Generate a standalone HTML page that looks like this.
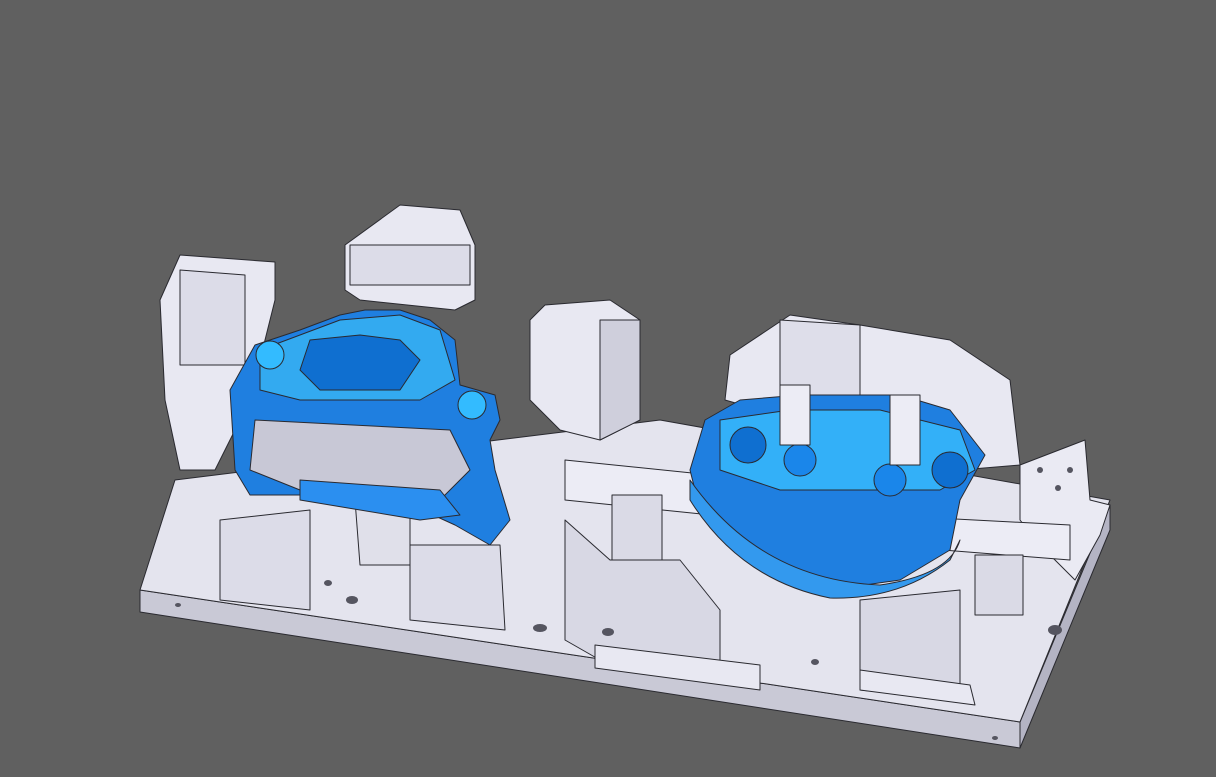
<!DOCTYPE html>
<html><head><meta charset="utf-8"><style>
html,body{margin:0;padding:0;background:#606060;width:1216px;height:777px;overflow:hidden}
svg{display:block}
</style></head><body>
<svg width="1216" height="777" viewBox="0 0 1216 777" xmlns="http://www.w3.org/2000/svg">
<rect width="1216" height="777" fill="#606060"/>
<g stroke="#2a2a30" stroke-width="1" stroke-linejoin="round">
<polygon points="140,590 1020,722 1020,748 140,612" fill="#c9c9d6"/>
<polygon points="1020,722 1110,505 1110,530 1020,748" fill="#b4b4c4"/>
<polygon points="175,480 660,420 1110,500 1020,722 140,590" fill="#e4e4ee"/>
<!-- left towers -->
<polygon points="160,300 180,255 275,262 275,300 250,400 215,470 180,470 165,400" fill="#e8e8f2"/>
<polygon points="180,270 245,275 245,365 180,365" fill="#dcdce8"/>
<polygon points="345,245 400,205 460,210 475,245 475,300 455,310 360,300 345,290" fill="#e8e8f2"/>
<polygon points="350,245 470,245 470,285 350,285" fill="#dcdce8"/>
<polygon points="530,320 545,305 610,300 640,320 640,420 600,440 560,430 530,400" fill="#e8e8f2"/>
<polygon points="600,320 640,320 640,420 600,440" fill="#cfcfdc"/>
<!-- right towers -->
<polygon points="730,355 790,315 860,325 950,340 1010,380 1020,465 960,470 900,420 760,410 725,400" fill="#e8e8f2"/>
<polygon points="780,320 860,325 860,395 780,395" fill="#dedeea"/>
<polygon points="1020,465 1085,440 1090,500 1110,505 1100,535 1075,580 1040,545 1020,520" fill="#eaeaf3"/>
<!-- middle blocks and cylinders -->
<polygon points="565,460 760,480 760,520 565,500" fill="#ececf5"/>
<polygon points="880,515 1070,525 1070,560 880,545" fill="#ececf5"/>
<rect x="612" y="495" width="50" height="70" fill="#dadae6"/>
<rect x="975" y="555" width="48" height="60" fill="#dadae6"/>
<polygon points="565,520 610,560 680,560 720,610 720,665 600,660 565,640" fill="#d8d8e4"/>
<polygon points="860,600 960,590 960,700 860,690" fill="#d8d8e4"/>
<polygon points="595,645 760,665 760,690 595,668" fill="#e8e8f2"/>
<polygon points="860,670 970,685 975,705 860,690" fill="#e8e8f2"/>
<polygon points="220,520 310,510 310,610 220,600" fill="#dcdce8"/>
<polygon points="410,545 500,545 505,630 410,620" fill="#dcdce8"/>
<polygon points="340,420 400,420 410,480 350,480" fill="#eeeef6"/>
<polygon points="355,500 410,500 410,565 360,565" fill="#e0e0ea"/>
<!-- left blue part -->
<polygon points="230,390 255,345 300,330 340,315 365,310 400,310 430,320 455,340 460,385 495,395 500,420 490,440 495,470 510,520 490,545 455,525 400,500 350,490 300,495 250,495 235,470" fill="#1f7fe0"/>
<polygon points="260,350 300,335 340,320 400,315 440,330 455,380 420,400 300,400 260,390" fill="#33aaf0"/>
<polygon points="310,340 360,335 400,340 420,360 400,390 320,390 300,370" fill="#0f6fd0"/>
<polygon points="255,420 450,430 470,470 440,500 300,490 250,470" fill="#c8c8d6"/>
<polygon points="300,480 440,490 460,515 420,520 300,500" fill="#2b8ff0"/>
<circle cx="270" cy="355" r="14" fill="#33bbff"/>
<circle cx="472" cy="405" r="14" fill="#33bbff"/>
<!-- right blue part -->
<polygon points="705,420 740,400 800,395 900,395 950,410 985,455 960,500 950,550 900,580 830,590 770,570 700,510 690,470" fill="#1f7fe0"/>
<path d="M690,480 Q760,580 880,585 Q950,575 960,540 L950,560 Q900,600 830,598 Q740,580 690,500 Z" fill="#3399ee"/>
<polygon points="720,420 790,410 880,410 960,430 975,470 940,490 780,490 720,470" fill="#33b0f8"/>
<circle cx="748" cy="445" r="18" fill="#0f6fd0"/>
<circle cx="950" cy="470" r="18" fill="#0f6fd0"/>
<circle cx="800" cy="460" r="16" fill="#1a86ea"/>
<circle cx="890" cy="480" r="16" fill="#1a86ea"/>
<rect x="780" y="385" width="30" height="60" fill="#ececf5"/>
<rect x="890" y="395" width="30" height="70" fill="#ececf5"/>
</g>
<g fill="#555560">
<ellipse cx="328" cy="583" rx="4" ry="3"/><ellipse cx="352" cy="600" rx="6" ry="4"/>
<ellipse cx="540" cy="628" rx="7" ry="4"/><ellipse cx="608" cy="632" rx="6" ry="4"/>
<ellipse cx="815" cy="662" rx="4" ry="3"/><ellipse cx="1055" cy="630" rx="7" ry="5"/>
<ellipse cx="1040" cy="470" rx="3" ry="3"/><ellipse cx="1058" cy="488" rx="3" ry="3"/><ellipse cx="1070" cy="470" rx="3" ry="3"/>
<ellipse cx="178" cy="605" rx="3" ry="2"/><ellipse cx="995" cy="738" rx="3" ry="2"/>
</g>
</svg>
</body></html>
